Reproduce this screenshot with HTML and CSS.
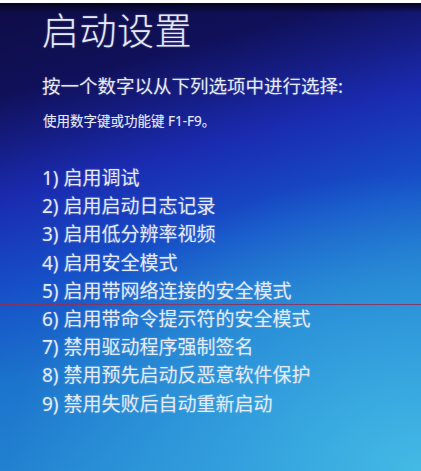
FILE: index.html
```html
<!DOCTYPE html>
<html lang="zh-CN">
<head>
<meta charset="utf-8">
<link rel="stylesheet" href="styles.css">
</head>
<body>
<div class="frame">
  <div class="screen">
    <h1 class="title">启动设置</h1>
    <p class="lead">按一个数字以从下列选项中进行选择:</p>
    <p class="hint">使用数字键或功能键 F1-F9。</p>
    <ol class="options">
      <li>1) 启用调试</li>
      <li>2) 启用启动日志记录</li>
      <li>3) 启用低分辨率视频</li>
      <li>4) 启用安全模式</li>
      <li class="cut">5) 启用带网络连接的安全模式</li>
      <li>6) 启用带命令提示符的安全模式</li>
      <li>7) 禁用驱动程序强制签名</li>
      <li>8) 禁用预先启动反恶意软件保护</li>
      <li>9) 禁用失败后自动重新启动</li>
    </ol>
  </div>
</div>
</body>
</html>
```
FILE: styles.css
```css
html, body {
  margin: 0;
  padding: 0;
  background: #ffffff;
}
.frame {
  width: 421px;
  height: 471px;
  padding-top: 3px;
  box-sizing: border-box;
  background: #ffffff;
}
.screen {
  height: 468px;
  box-sizing: border-box;
  padding: 6px 0 0 42px;
  color: #e4eaf6;
  font-family: "Noto Sans", "Noto Sans CJK SC", sans-serif;
  background:
    linear-gradient(180deg, #05051e 0px, rgba(10,12,70,0) 10px),
    radial-gradient(ellipse 460px 330px at 100% 100%, rgba(70,190,230,0.9) 0%, rgba(55,168,225,0.65) 45%, rgba(40,130,215,0) 90%),
    linear-gradient(165deg, #0e0d46 0%, #10105a 16%, #1a2bb0 34%, #1650c8 50%, #1c74cc 66%, #2a92d6 100%);
  overflow: hidden;
}
.title {
  margin: 0;
  font-size: 37px;
  font-weight: 300;
  line-height: 44px;
  letter-spacing: 0.5px;
  text-shadow: 0 0 2px rgba(255,255,255,0.35);
}
.lead {
  margin: 20px 0 0 0;
  font-size: 18.5px;
  line-height: 26px;
  text-shadow: 0 0 2px rgba(255,255,255,0.3);
}
.hint {
  margin: 14px 0 0 1px;
  font-size: 13.5px;
  line-height: 17px;
  text-shadow: 0 0 1px rgba(255,255,255,0.3);
}
.options {
  list-style: none;
  margin: 34px 0 0 0;
  padding: 0;
  font-size: 19px;
  line-height: 28.2px;
}
.options li {
  text-shadow: 0 0 2px rgba(255,255,255,0.3);
}
.options .cut {
  position: relative;
}
.options .cut::after {
  content: "";
  position: absolute;
  left: -42px;
  width: 421px;
  bottom: 0px;
  height: 1px;
  background: rgba(140, 50, 90, 0.9);
}
```
